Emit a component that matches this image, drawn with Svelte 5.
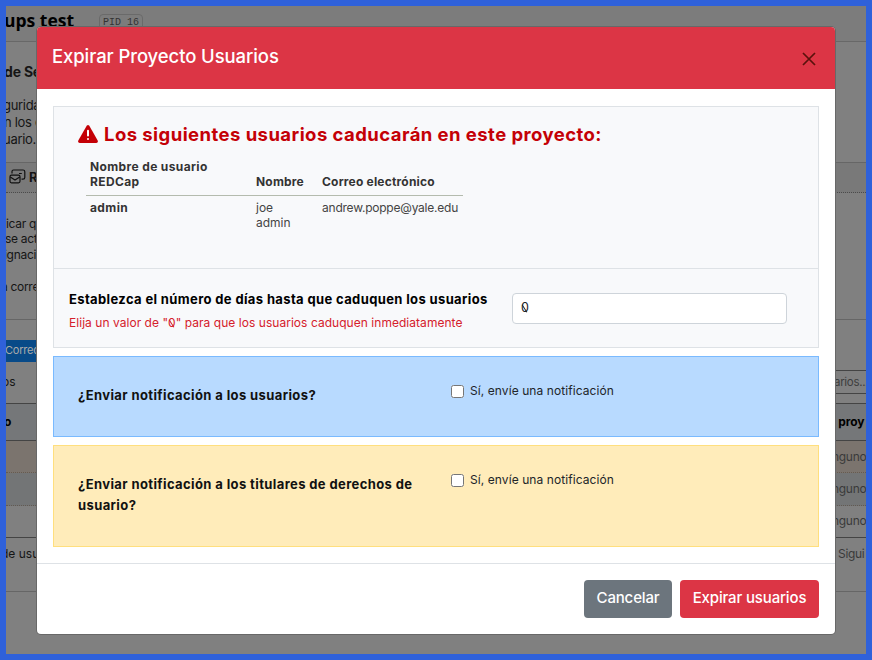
<script>
  const rows = [
    { h: 18, left: 'de Se', cls: 'strong', size: 14, m: -2 },
    { h: 16 },
    { h: 17, left: 'gurida', size: 13, m: -3 },
    { h: 17, left: 'n los e', size: 13, m: -2 },
    { h: 17, left: 'uario.', size: 13, m: -3 },
    { h: 16 }
  ];
  const info = [
    { h: 16, left: 'icar q' },
    { h: 15, left: 'se act', m: -1 },
    { h: 16, left: 'ignaci', m: -2 },
    { h: 16 },
    { h: 16, left: 'a corre', m: -5 }
  ];
  const users = [{ username: 'admin', name: ['joe', 'admin'], email: 'andrew.poppe@yale.edu' }];
</script>

<div class="screen">
  <div class="page">
    <div class="top"><b>ups test</b><span class="pid">PID 16</span></div>
    <div class="intro">
      {#each rows as r}
        <div class="row {r.cls || ''}" style="height:{r.h}px;font-size:{r.size || 12}px">
          <span style="margin-left:{r.m || 0}px">{r.left || ''}</span>
        </div>
      {/each}
    </div>
    <div class="tabs">
      <svg width="17" height="15" viewBox="0 0 17 15" fill="none" stroke="#111" stroke-width="1.2">
        <path d="M3 4.500V2.500Q3 1 4.500 1H14Q15.800 1 15.800 2.800V8.500Q15.800 10.200 14 10.200H12.500M10 4.500H12.800" />
        <rect x="1" y="6.200" width="10" height="7.600" rx="1.500" /><path d="M1.300 8l4.700 3 4.700-3" />
      </svg>
      <b>R</b>
    </div>
    <div class="info">
      {#each info as r}
        <div class="row" style="height:{r.h}px"><span style="margin-left:{r.m || 0}px">{r.left || ''}</span></div>
      {/each}
    </div>
    <div class="tools"><span class="import">Correo</span></div>
    <div class="filter"><span>os</span><span class="search">arios...</span></div>
    <div class="line thead"><b>o</b><b class="r head">. proy</b></div>
    <div class="line one"><span></span><span class="r">nguno</span></div>
    <div class="line two"><span></span><span class="r">nguno</span></div>
    <div class="line three"><span></span><span class="r">nguno</span></div>
    <div class="line pager"><span class="count">de usua</span><span class="r next">Sigui</span></div>
  </div>

  <div class="modal" role="dialog" aria-label="Expirar Proyecto Usuarios">
    <header>
      <h1>Expirar Proyecto Usuarios</h1>
      <svg width="14" height="14" viewBox="0 0 14 14" stroke="#5a120c" stroke-width="1.700"><path d="M1 1l12 12M13 1L1 13" /></svg>
    </header>
    <main>
      <section class="summary">
        <div class="list">
          <h2>
            <svg width="20" height="18" viewBox="0 0 20 18"><path fill="#c40006" d="M8.700.8Q10-.8 11.300.8L19.700 15.500Q20.400 17.600 18.300 18H1.700Q-.4 17.600.3 15.500Z" /><path stroke="#fff" stroke-width="2" stroke-linecap="round" d="M10 5.800v4.700M10 13.900v.1" /></svg>
            <span>Los siguientes usuarios caducarán en este proyecto:</span>
          </h2>
          <table>
            <thead><tr><th class="c1">Nombre de usuario<br />REDCap</th><th class="c2">Nombre</th><th class="c3">Correo electrónico</th></tr></thead>
            <tbody>
              {#each users as u}
                <tr><td><b>{u.username}</b></td><td>{u.name[0]}<br />{u.name[1]}</td><td class="mail">{u.email}</td></tr>
              {/each}
            </tbody>
          </table>
        </div>
        <div class="days">
          <div class="copy">
            <b>Establezca el número de días hasta que caduquen los usuarios</b>
            <small>Elija un valor de "<span class="zero">0</span>" para que los usuarios caduquen inmediatamente</small>
          </div>
          <div class="input"><span class="zero">0</span></div>
        </div>
      </section>
      <section class="notice blue">
        <b>¿Enviar notificación a los usuarios?</b>
        <label><input type="checkbox" /><span>Sí, envíe una notificación</span></label>
      </section>
      <section class="notice yellow">
        <b>¿Enviar notificación a los titulares de derechos de usuario?</b>
        <label><input type="checkbox" /><span>Sí, envíe una notificación</span></label>
      </section>
    </main>
    <footer><button class="cancel">Cancelar</button><button class="expire">Expirar usuarios</button></footer>
  </div>
</div>

<style>
  :global(body) { margin: 0; }
  * { box-sizing: border-box; }
  .screen { position: relative; width: 872px; height: 660px; overflow: hidden; border: 6px solid #2f61da; background: #808080; font-family: Inter, "Liberation Sans", sans-serif; color: #212529; }
  .page { color: #151515; height: 648px; font-size: 12px; }
  .top { height: 36px; display: flex; border-bottom: 1px solid #686868; background: #7c7c7c; }
  .top b { font: 700 17.500px/29px "Open Sans", sans-serif; color: #000; width: 93px; margin-left: -2px; white-space: nowrap; }
  .pid { margin: 8px 0 0 2px; width: 44px; height: 18px; border: 1px solid #6a6a6a; border-radius: 4px; font: 10px/16px "Liberation Mono", monospace; color: #333; text-align: center; }
  .intro { padding-top: 20px; }
  .row { display: flex; align-items: center; white-space: nowrap; width: 40px; letter-spacing: -.3px; }
  .strong { font-weight: 700; letter-spacing: -.2px; }
  .tabs { height: 31px; display: flex; align-items: center; gap: 3px; padding: 0 3px; border-top: 1px solid #666; border-bottom: 1px dotted #4b4b4b; background: #797979; font-size: 13px; margin-top: -1px; }
  .tabs svg { margin-top: -2px; }
  .tabs b { margin-top: -2px; }
  .info { height: 127px; padding-top: 22px; border-bottom: 1px solid #666; }
  .tools { height: 43px; padding-top: 20px; }
  .import { display: block; width: 60px; height: 22px; background: #084a88; color: #aaa; font-size: 11px; line-height: 20px; margin-left: -1px; letter-spacing: -.2px; }
  .filter { height: 40px; display: flex; justify-content: space-between; line-height: 38px; }
  .filter > span:first-child { margin-left: -4px; }
  .search { width: 40px; height: 24px; margin-top: 7px; border: 1px solid #444; border-right: 0; padding-left: 7px; line-height: 22px; color: #3d3d3d; font-size: 11.500px; letter-spacing: -.3px; white-space: nowrap; }
  .line { display: flex; justify-content: space-between; align-items: center; white-space: nowrap; }
  .r { width: 34px; color: #3a3a3a; font-size: 12px; letter-spacing: -.3px; }
  .thead { height: 38px; border-top: 1px solid #444; border-bottom: 1px solid #444; background: #757779; padding-bottom: 1px; }
  .thead b { color: #000; margin-left: -2px; }
  .thead .head { letter-spacing: -.1px; }
  .one { height: 32px; background: #7b746e; border-bottom: 1px dotted #665b50; }
  .two { height: 33px; background: #737576; border-bottom: 1px dotted #625a52; padding-bottom: 2px; }
  .three { height: 32px; border-bottom: 1px solid #444; padding-bottom: 2px; }
  .pager { height: 54px; border-bottom: 1px solid #666; align-items: flex-start; line-height: 32px; }
  .count { margin-left: -5px; }
  .pager .next { width: 28px; }

  .modal { position: absolute; left: 31px; top: 21px; width: 798px; height: 607px; background: #fff; border-radius: 4px; overflow: hidden; box-shadow: 0 0 0 1px #686868; display: flex; flex-direction: column; }
  header { height: 62px; background: #dc3545; padding: 0 19px 0 15px; display: flex; justify-content: space-between; align-items: center; color: #fff; }
  header svg { margin-top: 1px; }
  h1 { margin: -5px 0 0; font-size: 18.500px; font-weight: 500; letter-spacing: -.1px; }
  main { padding: 17px 16px 16px; display: flex; flex-direction: column; gap: 8px; }
  .summary { height: 242px; border: 1px solid #dee2e6; background: #f8f9fb; }
  .list { height: 162px; border-bottom: 1px solid #dee2e6; padding: 16px 0 0 24px; }
  h2 { display: flex; gap: 6px; align-items: center; margin: 0; height: 22px; font-size: 18.500px; color: #c40006; white-space: nowrap; letter-spacing: .44px; }
  table { margin: 12px 0 0 8px; width: 377px; border-collapse: collapse; table-layout: fixed; font-size: 12px; line-height: 15px; color: #333; }
  th { text-align: left; vertical-align: bottom; padding: 2px 4px 6px; border-bottom: 1px solid #b4bbae; letter-spacing: .2px; white-space: nowrap; }
  th.c1 { letter-spacing: .37px; }
  td { padding: 4px 4px 5px; vertical-align: top; color: #444; }
  td b { color: #333; letter-spacing: .4px; }
  .mail { letter-spacing: -.22px; }
  .c1 { width: 166px; } .c2 { width: 66px; }
  .days { height: 79px; display: flex; padding: 0 15px; }
  .copy { width: 443px; padding-top: 20px; white-space: nowrap; }
  .copy b { display: block; font-size: 13px; line-height: 20px; color: #000; letter-spacing: .37px; }
  small { display: block; font-size: 12px; line-height: 20px; margin-top: 4px; color: #d5202b; letter-spacing: .04px; }
  .input { width: 275px; height: 31px; margin-top: 24px; border: 1px solid #ced4da; border-radius: 4px; background: #fff; padding-left: 8px; font-size: 12.500px; line-height: 28px; }
  .zero { position: relative; display: inline-block; }
  .zero::after { content: ""; position: absolute; left: calc(50% - .5px); top: 50%; width: 1px; height: 9px; margin-top: -4.500px; background: currentColor; transform: rotate(-32deg); }
  .notice { display: flex; border: 1px solid; }
  .notice > b { width: 373px; padding: 28px 0 0 24px; font-size: 13px; line-height: 21px; color: #111; letter-spacing: .39px; }
  .blue { height: 81px; background: #b8daff; border-color: #7abaff; }
  .yellow { height: 102px; background: #ffecba; border-color: #ffdf7e; }
  label { display: flex; align-items: center; height: 20px; margin: 24px 0 0 24px; font-size: 12px; white-space: nowrap; letter-spacing: .08px; }
  label input { width: 13px; height: 13px; margin: 1px 6px 0 0; }
  label span { margin-top: -2px; }
  footer { height: 71px; margin-top: auto; border-top: 1px solid #dee2e6; display: flex; justify-content: flex-end; gap: 8px; padding: 16px 16px 0; }
  button { height: 38px; border: 0; border-radius: 4px; padding: 0 0 3px; color: #fff; font: 500 15px Inter, sans-serif; letter-spacing: -.15px; }
  .cancel { width: 88px; background: #6c757d; }
  .expire { width: 139px; background: #dc3545; }
</style>
